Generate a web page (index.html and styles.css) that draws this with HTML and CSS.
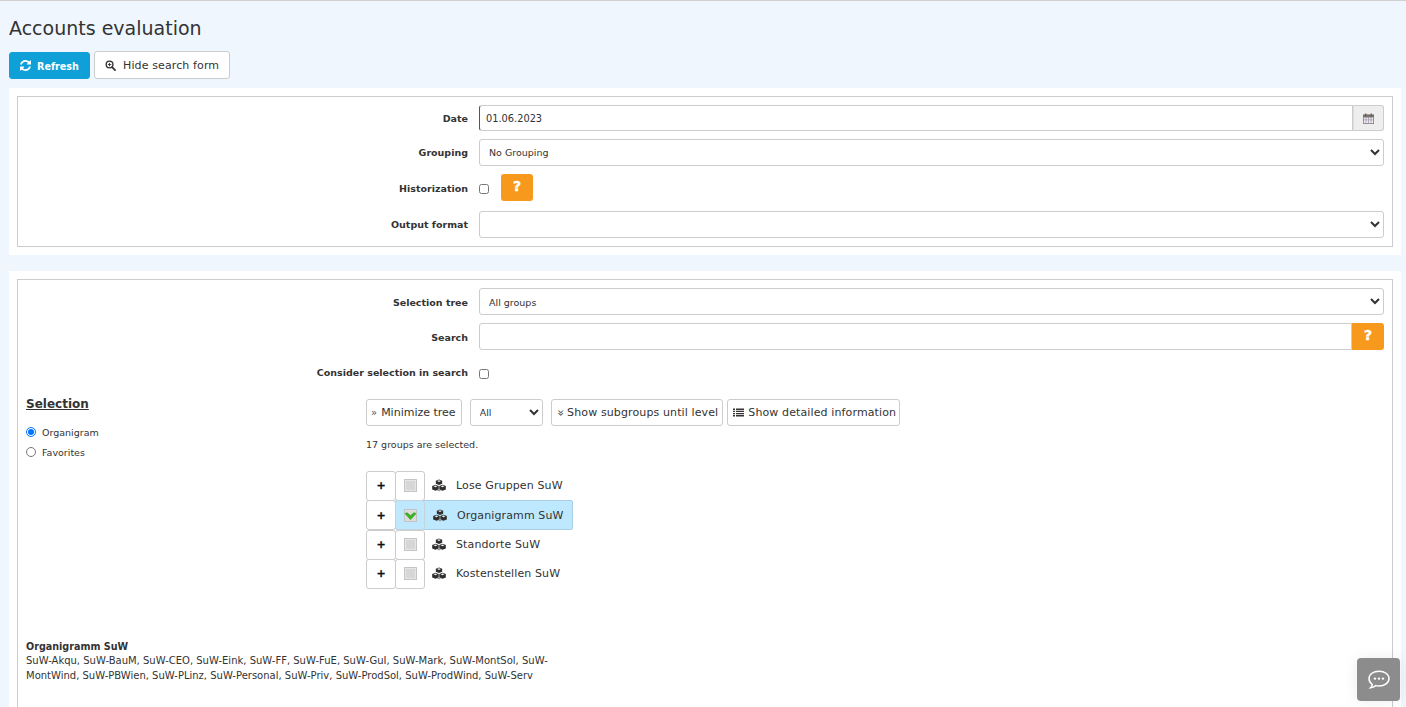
FILE: index.html
```html
<!DOCTYPE html>
<html lang="en">
<head>
  <meta charset="UTF-8" />
  <meta name="viewport" content="width=device-width, initial-scale=1.0" />
  <title>Accounts evaluation</title>
  <link rel="stylesheet" href="styles.css">
</head>
<body>
  <svg class="icon-defs" width="0" height="0">
    <symbol id="i-cubes" viewBox="0 0 15 13">
      <path d="M7.500 0l3.400 1.400v3.200L7.500 6 4.100 4.600V1.400z" fill="#2e2e2e"/>
      <path d="M3.700 5.600l3.500 1.400v3.700l-3.500 1.500L.2 10.700V7z" fill="#2e2e2e"/>
      <path d="M11.300 5.600l3.500 1.400v3.700l-3.500 1.500-3.500-1.500V7z" fill="#2e2e2e"/>
      <path d="M7.500 1l2 .8-2 .9-2-.9zM3.700 6.600l2 .8-2 .9-2-.9zM11.300 6.600l2 .8-2 .9-2-.9z" fill="#f2f2f2"/>
      <path d="M5.400 11.500L7.500 9.800l2.100 1.700-2.100 1.400z" fill="#9a9a9a"/>
    </symbol>
    <symbol id="i-check-off" viewBox="0 0 13 13">
      <rect x=".5" y=".5" width="12" height="12" fill="#e6e6e6" stroke="#c4c4c4"/>
      <rect x="2" y="2" width="9" height="9" fill="#d6d6d6"/>
    </symbol>
  </svg>

  <div class="page">
    <h1 class="title">Accounts evaluation</h1>
    <div class="toolbar">
      <button class="btn btn-primary">
        <svg class="icon" viewBox="0 0 1536 1536"><path fill="currentColor" d="M1511 928q0 5-1 7-64 268-268 434.5t-478 166.5q-146 0-282.5-55t-243.5-157l-129 129q-19 19-45 19t-45-19-19-45v-448q0-26 19-45t45-19h448q26 0 45 19t19 45-19 45l-137 137q71 66 161 102t187 36q134 0 250-65t186-179q11-17 53-117 8-23 30-23h192q13 0 22.5 9.5t9.5 22.5zm25-800v448q0 26-19 45t-45 19h-448q-26 0-45-19t-19-45 19-45l138-138q-148-137-349-137-134 0-250 65t-186 179q-11 17-53 117-8 23-30 23h-199q-13 0-22.5-9.5t-9.5-22.5v-7q65-268 270-434.5t480-166.5q146 0 284 55.5t245 156.5l130-129q19-19 45-19t45 19 19 45z"/></svg>
        <span class="btn-text-low">Refresh</span>
      </button>
      <button class="btn btn-default">
        <svg class="icon" viewBox="0 0 14 14"><circle cx="5.8" cy="5.8" r="4.3" fill="none" stroke="currentColor" stroke-width="1.7"/><path d="M9 9l3.8 3.8" stroke="currentColor" stroke-width="2.2" stroke-linecap="round"/><path d="M3.6 5.8h4.4M5.8 3.6v4.4" stroke="currentColor" stroke-width="1.2"/></svg>
        Hide search form
      </button>
    </div>

    <section class="panel">
      <div class="frame frame-first">
        <div class="form-row row-date">
          <label class="form-label">Date</label>
          <div class="input-group">
            <input class="field field-date" type="text" value="01.06.2023" />
            <span class="addon addon-grey">
              <svg class="cal" viewBox="0 0 12 12">
                <rect x=".5" y="2" width="11" height="9.5" fill="#f4f0ee" stroke="#8a8a8a"/>
                <path d="M.5 5h11M.5 7.5h11M3.3 4v7M6 4v7M8.7 4v7" stroke="#9a93a8" stroke-width=".8"/>
                <rect x="0" y="2" width="12" height="2.4" fill="#77706b"/>
                <path d="M3 .5v2.5M9 .5v2.5" stroke="#5e5853" stroke-width="1.4"/>
              </svg>
            </span>
          </div>
        </div>
        <div class="form-row row-grouping">
          <label class="form-label">Grouping</label>
          <select class="field field-select"><option>No Grouping</option></select>
        </div>
        <div class="form-row row-hist">
          <label class="form-label label-low">Historization</label>
          <div class="inline-check">
            <input class="check" type="checkbox" />
            <button class="btn-help">?</button>
          </div>
        </div>
        <div class="form-row">
          <label class="form-label">Output format</label>
          <select class="field field-select"><option></option></select>
        </div>
      </div>
    </section>

    <section class="panel panel-second">
      <div class="frame frame-second">
        <div class="form-row row-tree">
          <label class="form-label label-low">Selection tree</label>
          <select class="field field-select"><option>All groups</option></select>
        </div>
        <div class="form-row row-search">
          <label class="form-label label-low">Search</label>
          <div class="input-group">
            <input class="field field-date" type="text" />
            <button class="addon addon-help">?</button>
          </div>
        </div>
        <div class="form-row row-consider">
          <label class="form-label label-high">Consider selection in search</label>
          <input class="check" type="checkbox" />
        </div>

        <div class="selection">
          <aside class="selection-side">
            <h3 class="selection-title">Selection</h3>
            <label class="radio-line"><input type="radio" name="sel" checked /> Organigram</label>
            <label class="radio-line"><input type="radio" name="sel" /> Favorites</label>
          </aside>
          <div class="selection-main">
            <div class="tree-tools">
              <button class="btn-tool btn-minimize"><span class="chev">»</span> Minimize tree</button>
              <select class="level-select"><option>All</option></select>
              <button class="btn-tool btn-levels"><span class="chev chev-down">»</span> Show subgroups until level</button>
              <button class="btn-tool btn-details">
                <svg class="icon-list" viewBox="0 0 11 9"><path d="M0 .5h2v1.4H0zM3 .5h8v1.4H3zM0 2.7h2v1.4H0zM3 2.7h8v1.4H3zM0 4.9h2v1.4H0zM3 4.9h8v1.4H3zM0 7.1h2v1.4H0zM3 7.1h8v1.4H3z" fill="#333"/></svg>
                Show detailed information
              </button>
            </div>
            <p class="selected-count">17 groups are selected.</p>
            <ul class="tree">
              <li class="tree-row">
                <button class="tree-box tree-plus">+</button>
                <span class="tree-box"><svg class="tree-check"><use href="#i-check-off"/></svg></span>
                <span class="tree-node"><svg class="cubes"><use href="#i-cubes"/></svg>Lose Gruppen SuW</span>
              </li>
              <li class="tree-row tree-row-active">
                <button class="tree-box tree-plus">+</button>
                <span class="active-wrap">
                  <span class="tree-box tree-box-active">
                    <svg class="tree-check" viewBox="0 0 13 13">
                      <rect x=".5" y=".5" width="12" height="12" fill="#dcdcdc" stroke="#c4c4c4"/>
                      <path d="M.5 4.500L3 3.200l3.500 3 3.500-3 2.500 1.300-6 6.500z" fill="#3fae2a"/>
                    </svg>
                  </span>
                  <span class="tree-node"><svg class="cubes"><use href="#i-cubes"/></svg>Organigramm SuW</span>
                </span>
              </li>
              <li class="tree-row">
                <button class="tree-box tree-plus">+</button>
                <span class="tree-box"><svg class="tree-check"><use href="#i-check-off"/></svg></span>
                <span class="tree-node"><svg class="cubes"><use href="#i-cubes"/></svg>Standorte SuW</span>
              </li>
              <li class="tree-row">
                <button class="tree-box tree-plus">+</button>
                <span class="tree-box"><svg class="tree-check"><use href="#i-check-off"/></svg></span>
                <span class="tree-node"><svg class="cubes"><use href="#i-cubes"/></svg>Kostenstellen SuW</span>
              </li>
            </ul>
          </div>
        </div>

        <div class="summary">
          <strong class="summary-title">Organigramm SuW</strong>
          <p class="summary-text">SuW-Akqu, SuW-BauM, SuW-CEO, SuW-Eink, SuW-FF, SuW-FuE, SuW-GuI, SuW-Mark, SuW-MontSol, SuW-MontWind, SuW-PBWien, SuW-PLinz, SuW-Personal, SuW-Priv, SuW-ProdSol, SuW-ProdWind, SuW-Serv</p>
        </div>
      </div>
    </section>
  </div>

  <button class="chat-btn" aria-label="Chat">
    <svg viewBox="0 0 24 20" width="24" height="20">
      <path d="M12 1.2c5.6 0 10 3 10 7.4s-4.4 7.4-10 7.4c-1.2 0-2.300-.1-3.300-.4-1.500 1.300-3.200 2-5.200 2.200 1-1 1.600-2.100 1.800-3.300C3.400 13.200 2 11.100 2 8.600 2 4.200 6.400 1.200 12 1.200z" fill="none" stroke="#fff" stroke-width="1.500"/>
      <circle cx="8" cy="8.600" r="1.200" fill="#fff"/><circle cx="12" cy="8.600" r="1.200" fill="#fff"/><circle cx="16" cy="8.600" r="1.200" fill="#fff"/>
    </svg>
  </button>
</body>
</html>
```

FILE: styles.css
```css
html, body {
  margin: 0;
  padding: 0;
  height: 707px;
  overflow: hidden;
}
body {
  font-family: 'DejaVu Sans', Verdana, sans-serif;
  font-size: 10px;
  color: #333;
  background: #eff6fe;
  border-top: 1px solid #d0d0d0;
  box-sizing: border-box;
}
.icon-defs {
  position: absolute;
}
.page {
  padding: 0 5px 0 9px;
}
.title {
  margin: 0;
  padding-top: 16px;
  font-size: 19px;
  font-weight: normal;
  line-height: 22px;
  color: #333;
}
.toolbar {
  display: flex;
  gap: 4px;
  margin-top: 12px;
}
.btn {
  display: flex;
  align-items: center;
  height: 28px;
  border-radius: 3px;
  font-family: inherit;
  font-size: 11px;
  cursor: pointer;
}
.btn-primary {
  width: 81px;
  height: 27px;
  margin-top: 1px;
  padding: 0 0 0 10px;
  gap: 6px;
  border: 1px solid #0fa0d8;
  background: #0fa0d8;
  color: #fff;
  font-weight: bold;
  font-size: 9.6px;
}
.btn-text-low {
  padding-top: 2px;
}
.btn-default {
  padding: 0 10px 0 10px;
  gap: 7px;
  border: 1px solid #ccc;
  background: #fff;
  color: #333;
  letter-spacing: .12px;
}
.icon {
  width: 11px;
  height: 11px;
}
.panel {
  background: #fff;
  margin-top: 9px;
  padding: 8px 8px 8px 8px;
}
.panel-second {
  margin-top: 16px;
  padding-bottom: 0;
}
.frame {
  border: 1px solid #ccc;
  padding: 8px 8px 8px 0;
}
.frame-second {
  border-bottom: none;
  height: 430px;
  padding-bottom: 0;
}
.form-row {
  display: grid;
  grid-template-columns: 450px 1fr;
  column-gap: 11px;
  align-items: center;
}
.row-date { margin-bottom: 8px; }
.row-grouping { margin-bottom: 8px; }
.row-hist { margin-bottom: 10px; }
.row-tree { margin-bottom: 8px; }
.row-search { margin-bottom: 15px; }
.row-consider { height: 16px; justify-items: start; }
.row-tree .field-select { padding-top: 1px; }
.form-label {
  text-align: right;
  font-weight: bold;
  font-size: 9.5px;
  justify-self: end;
}
.label-low {
  padding-top: 2px;
}
.label-high {
  padding-bottom: 2px;
}
.field {
  box-sizing: border-box;
  width: 100%;
  height: 27px;
  border: 1px solid #ccc;
  border-radius: 3px;
  background: #fff;
  font-family: inherit;
  font-size: 9.5px;
  color: #333;
}
.field-date {
  height: 26px;
  padding: 0 6px;
  border-radius: 3px 0 0 3px;
  font-size: 9.8px;
}
.row-date .field-date {
  border-left: 1px solid #555;
}
.row-search .field-date {
  height: 27px;
}
.field-select {
  padding: 0 5px;
}
.input-group {
  display: flex;
}
.addon {
  flex: none;
  box-sizing: border-box;
  width: 32px;
  display: flex;
  align-items: center;
  justify-content: center;
  border-radius: 0 3px 3px 0;
}
.addon-grey {
  width: 31px;
  background: #eee;
  border: 1px solid #ccc;
  border-left: 1px solid #ddd;
}
.cal {
  width: 11px;
  height: 11px;
}
.addon-help {
  border: none;
  background: #f7991c;
  color: #fff;
  font-family: inherit;
  font-weight: bold;
  font-size: 14px;
  padding: 0 0 3px;
  -webkit-text-stroke: .4px #fff;
}
.inline-check {
  display: flex;
  align-items: center;
  gap: 12px;
}
.check {
  width: 10px;
  height: 10px;
  margin: 2px 0 0;
}
.row-consider .check {
  margin-top: 1px;
}
.btn-help {
  width: 32px;
  height: 27px;
  border: none;
  border-radius: 3px;
  background: #f7991c;
  color: #fff;
  font-family: inherit;
  font-weight: bold;
  font-size: 14px;
  padding: 0 0 3px;
  -webkit-text-stroke: .4px #fff;
}
.selection {
  display: flex;
  margin-top: 12px;
}
.selection-side {
  width: 348px;
  padding-left: 8px;
  box-sizing: border-box;
  flex: none;
}
.selection-title {
  margin: 0 0 11px;
  display: inline-block;
  font-size: 12px;
  line-height: 13px;
  padding: 5px 0 0;
  font-weight: bold;
  text-decoration: underline;
}
.radio-line {
  display: flex;
  align-items: center;
  gap: 6px;
  height: 20px;
  font-size: 9.5px;
}
.radio-line input {
  width: 10px;
  height: 10px;
  margin: 0;
}
.selection-main {
  flex: 1;
  padding-top: 6px;
}
.tree-tools {
  display: flex;
  gap: 4px;
}
.btn-tool {
  display: flex;
  align-items: center;
  gap: 4px;
  height: 27px;
  padding: 0 4px;
  border: 1px solid #ccc;
  border-radius: 3px;
  background: #fff;
  font-family: inherit;
  font-size: 11px;
  letter-spacing: .12px;
  color: #333;
  white-space: nowrap;
}
.btn-minimize {
  letter-spacing: 0;
  padding-right: 5px;
}
.btn-levels {
  margin-left: 4px;
  padding-left: 5px;
  gap: 3px;
}
.btn-details {
  padding: 0 3px 0 5px;
}
.chev {
  font-size: 10px;
  color: #555;
}
.chev-down {
  display: inline-block;
  transform: rotate(90deg);
  font-size: 12px;
  line-height: 10px;
}
.icon-list {
  width: 11px;
  height: 9px;
}
.level-select {
  width: 73px;
  height: 27px;
  margin-left: 4px;
  padding: 0 5px;
  border: 1px solid #ccc;
  border-radius: 3px;
  background: #fff;
  font-family: inherit;
  font-size: 9.5px;
  color: #333;
}
.selected-count {
  margin: 13px 0 20px;
  font-size: 9.5px;
  line-height: 12px;
}
.tree {
  list-style: none;
  margin: 0;
  padding: 0;
}
.tree-row {
  display: flex;
  align-items: center;
  height: 29px;
}
.tree-row-active {
  height: 30px;
}
.tree-box {
  box-sizing: border-box;
  display: flex;
  align-items: center;
  justify-content: center;
  width: 30px;
  height: 30px;
  border: 1px solid #ccc;
  border-radius: 3px;
  background: #fff;
  padding: 0;
  margin-right: -1px;
}
.tree-plus {
  font-family: inherit;
  font-weight: bold;
  font-size: 11px;
  color: #111;
  -webkit-text-stroke: .3px #111;
}
.tree-check {
  width: 13px;
  height: 13px;
}
.tree-node {
  display: flex;
  align-items: center;
  font-size: 11px;
  letter-spacing: .12px;
  padding-left: 8px;
  white-space: nowrap;
}
.cubes {
  width: 14px;
  height: 13px;
  margin-right: 10px;
}
.active-wrap {
  display: flex;
  align-items: center;
  height: 30px;
  box-sizing: border-box;
  border: 1px solid #a9cfe6;
  border-radius: 2px;
  background: #bde8fd;
  padding-right: 8px;
}
.tree-box-active {
  background: #bde8fd;
  height: 30px;
  margin: -1px 0 -1px -1px;
  border-color: #c4d4dc;
}
.summary {
  margin: 52px 0 0 8px;
  width: 530px;
}
.summary-title {
  display: block;
  font-size: 9.6px;
  line-height: 13px;
}
.summary-text {
  margin: 0;
  font-size: 10px;
  line-height: 15px;
}
.chat-btn {
  position: fixed;
  left: 1357px;
  top: 658px;
  width: 43px;
  height: 43px;
  border: none;
  border-radius: 4px;
  background: #8c8c8c;
  display: flex;
  align-items: center;
  justify-content: center;
  padding: 0;
  box-shadow: 0 0 14px rgba(0, 0, 0, 0.08);
}
```
